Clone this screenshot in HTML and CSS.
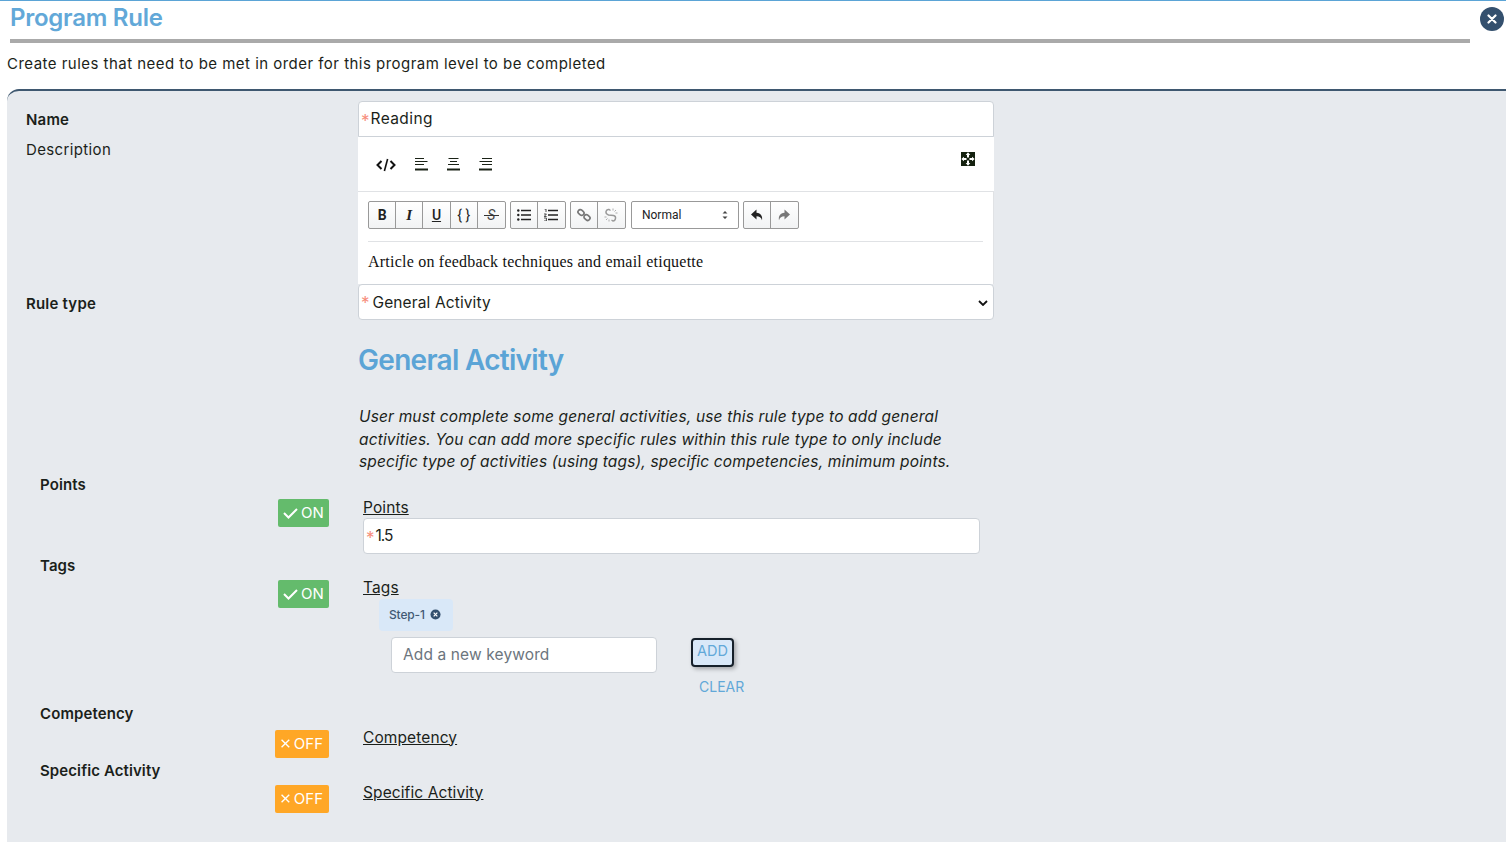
FILE: index.html
```html
<!DOCTYPE html>
<html lang="en">
<head>
<meta charset="utf-8">
<title>Program Rule</title>
<link rel="stylesheet" href="styles.css">
</head>
<body>
<header class="head">
  <h1 class="title">Program Rule</h1>
  <button class="close" aria-label="Close"><svg viewBox="0 0 10 10" width="10" height="10"><path d="M1.500 1.500l7 7M8.500 1.500l-7 7" stroke="#fff" stroke-width="2.200" stroke-linecap="round"/></svg></button>
</header>
<div class="rule"></div>
<p class="subtitle">Create rules that need to be met in order for this program level to be completed</p>
<main class="panel">
  <div class="form-row name-row">
    <label class="lbl strong name-lbl">Name</label>
    <div class="field"><span class="req">*</span>Reading</div>
  </div>
  <div class="form-row desc-row">
    <label class="lbl">Description</label>
    <div class="editor">
      <div class="editor-top">
        <div class="top-icons">
          <svg class="ic-code" viewBox="0 0 20 14" width="20" height="14"><path d="M5.500 3L1.500 7l4 4M14.500 3l4 4-4 4" fill="none" stroke="#111" stroke-width="2"/><path d="M11.600 1L8.400 13" fill="none" stroke="#111" stroke-width="1.600"/></svg>
          <svg viewBox="0 0 13 13" width="13" height="13"><path d="M0 .5h9M0 3.500h12.500M0 6.500h9" stroke="#1a2216" stroke-width="1.100"/><path d="M0 11.500h13" stroke="#1a2216" stroke-width="2"/></svg>
          <svg viewBox="0 0 13 13" width="13" height="13"><path d="M1.500 .5h10M3 3.500h7M1 6.500h11" stroke="#1a2216" stroke-width="1.100"/><path d="M0 11.500h13" stroke="#1a2216" stroke-width="2"/></svg>
          <svg viewBox="0 0 13 13" width="13" height="13"><path d="M3 .5h10M.5 3.500h12.500M3 6.500h10" stroke="#1a2216" stroke-width="1.100"/><path d="M0 11.500h13" stroke="#1a2216" stroke-width="2"/></svg>
        </div>
        <svg class="expand" viewBox="0 0 14 14" width="14" height="14"><rect width="14" height="14" fill="#14210f"/><path d="M7 .3L9.300 3H8v2L7 6 6 5V3H4.700zM7 13.700L9.300 11H8V9L7 8 6 9v2H4.700zM.3 7L3 4.700V6h2l1 1-1 1H3v1.300zM13.700 7L11 4.700V6H9L8 7l1 1h2v1.300z" fill="#fff"/></svg>
      </div>
      <div class="editor-main">
        <div class="toolbar">
          <div class="tgroup tgroup-fmt">
            <button class="tbtn b1">B</button>
            <button class="tbtn b2">I</button>
            <button class="tbtn b3">U</button>
            <button class="tbtn b4">{ }</button>
            <button class="tbtn b5">S</button>
          </div>
          <div class="tgroup">
            <button class="tbtn"><svg viewBox="0 0 14 12" width="14" height="12"><circle cx="1.300" cy="1.500" r="1.200" fill="#222"/><circle cx="1.300" cy="6" r="1.200" fill="#222"/><circle cx="1.300" cy="10.500" r="1.200" fill="#222"/><path d="M4 1.500h10M4 6h10M4 10.500h10" stroke="#222" stroke-width="1.400"/></svg></button>
            <button class="tbtn"><svg viewBox="0 0 14 12" width="14" height="12"><path d="M.5 0h1.500v3M0 5h2.400L.2 7.500h2.400M0 9h2.400v3H0" fill="none" stroke="#222" stroke-width=".8"/><path d="M4 1.500h10M4 6h10M4 10.500h10" stroke="#222" stroke-width="1.400"/></svg></button>
          </div>
          <div class="tgroup">
            <button class="tbtn"><svg viewBox="0 0 14 14" width="14" height="14"><g fill="none" stroke="#777" stroke-width="1.700"><rect x=".8" y="2.200" width="6.400" height="4.600" rx="2.300" transform="rotate(40 4 4.500)"/><rect x="6.800" y="7.200" width="6.400" height="4.600" rx="2.300" transform="rotate(40 10 9.500)"/></g></svg></button>
            <button class="tbtn"><svg viewBox="0 0 14 14" width="14" height="14"><g fill="none" stroke="#999" stroke-width="1.400"><path d="M6.500 2.500L5 1.500Q2.500 1 2 3.500t2.500 3.500l5 .5q2.500.5 2 3T9 13l-1.500-1"/><path d="M9 .5v2M12 2l-1.500 1.500M13.500 5h-2M.5 9h2M2 12l1.500-1.500M5 13.500v-2" stroke-width=".8"/></g></svg></button>
          </div>
          <div class="tselect"><span>Normal</span><svg viewBox="0 0 8 12" width="8" height="12"><path d="M1.500 4.500L4 2l2.500 2.500zM1.500 7.500L4 10l2.500-2.500z" fill="#444"/></svg></div>
          <div class="tgroup">
            <button class="tbtn"><svg viewBox="0 0 14 14" width="14" height="14"><path d="M6.500 1.500L1 6.500l5.500 5V8.300c3 0 4.500 1 5.500 4 .8-4-1-7.300-5.500-7.600z" fill="#222"/></svg></button>
            <button class="tbtn"><svg viewBox="0 0 14 14" width="14" height="14"><path d="M7.500 1.500l5.500 5-5.500 5V8.300c-3 0-4.500 1-5.500 4-.8-4 1-7.300 5.500-7.600z" fill="#777"/></svg></button>
          </div>
        </div>
        <div class="editor-text">Article on feedback techniques and email etiquette</div>
      </div>
    </div>
  </div>
  <div class="form-row type-row">
    <label class="lbl strong type-lbl">Rule type</label>
    <div class="field selectish"><span class="req req-s">*</span><span>General Activity</span><svg class="chev" viewBox="0 0 10 6" width="10" height="6"><path d="M1 1l4 4 4-4" fill="none" stroke="#111" stroke-width="1.800"/></svg></div>
  </div>
  <div class="form-row intro-row">
    <span></span>
    <div class="intro">
      <h2 class="sub-h">General Activity</h2>
      <p class="desc">User must complete some general activities, use this rule type to add general activities. You can add more specific rules within this rule type to only include specific type of activities (using tags), specific competencies, minimum points.</p>
    </div>
  </div>

  <section class="opt opt-points">
    <div class="opt-lbl">Points</div>
    <div class="opt-row">
      <div class="opt-left"><span class="tog on"><svg viewBox="0 0 15 12" width="15" height="12"><path d="M1 6l4.500 4.500L14 2" fill="none" stroke="#fff" stroke-width="2"/></svg>ON</span></div>
      <div class="opt-body">
        <a class="opt-link">Points</a>
        <div class="field points-field"><span class="req">*</span>1.5</div>
      </div>
    </div>
  </section>
  <section class="opt opt-tags">
    <div class="opt-lbl">Tags</div>
    <div class="opt-row">
      <div class="opt-left"><span class="tog on"><svg viewBox="0 0 15 12" width="15" height="12"><path d="M1 6l4.500 4.500L14 2" fill="none" stroke="#fff" stroke-width="2"/></svg>ON</span></div>
      <div class="opt-body">
        <a class="opt-link">Tags</a>
        <div class="chip">Step-1 <svg viewBox="0 0 12 12" width="11" height="11"><circle cx="6" cy="6" r="5.500" fill="#34506e"/><path d="M4 4l4 4M8 4l-4 4" stroke="#fff" stroke-width="1.300"/></svg></div>
        <div class="kw-row">
          <div class="kw-input">Add a new keyword</div>
          <div class="kw-btns">
            <button class="add">ADD</button>
            <button class="clear">CLEAR</button>
          </div>
        </div>
      </div>
    </div>
  </section>
  <section class="opt opt-comp">
    <div class="opt-lbl">Competency</div>
    <div class="opt-row">
      <div class="opt-left"><span class="tog off"><svg viewBox="0 0 11 11" width="11" height="11"><path d="M.7.7l9.600 9.600M10.300.7L.7 10.300" stroke="#fff" stroke-width="1.700"/></svg>OFF</span></div>
      <div class="opt-body"><a class="opt-link">Competency</a></div>
    </div>
  </section>
  <section class="opt opt-spec">
    <div class="opt-lbl">Specific Activity</div>
    <div class="opt-row">
      <div class="opt-left"><span class="tog off"><svg viewBox="0 0 11 11" width="11" height="11"><path d="M.7.7l9.600 9.600M10.300.7L.7 10.300" stroke="#fff" stroke-width="1.700"/></svg>OFF</span></div>
      <div class="opt-body"><a class="opt-link">Specific Activity</a></div>
    </div>
  </section>
</main>
</body>
</html>
```
FILE: styles.css
```css
* { box-sizing: border-box; }
html, body { margin: 0; height: 842px; overflow: hidden; }
body {
  background: #fff;
  border-top: 1px solid #5ba4d6;
  font-family: Inter, "Liberation Sans", sans-serif;
  color: #1b1f1a;
  font-size: 15px;
}
.head { display: flex; justify-content: space-between; align-items: center; height: 35px; padding: 0 2px 0 10px; }
.title { margin: -2px 0 0; font-size: 24px; font-weight: 600; color: #62a8d8; letter-spacing: -0.25px; line-height: 33px; }
.close { width: 24px; height: 24px; border: 0; border-radius: 50%; background: #34506e; display: flex; align-items: center; justify-content: center; padding: 0; }
.rule { height: 4px; width: 1460px; margin: 3px 0 0 10px; background: #aaa; }
.subtitle { margin: 11px 0 0 7px; line-height: 20px; font-size: 15px; letter-spacing: .47px; }
.panel {
  margin: 15px 0 0 7px;
  height: 760px;
  background: #e7eaee;
  border-top: 2px solid #3f5870;
  border-top-left-radius: 12px;
  padding-top: 10px;
}
.form-row { display: grid; grid-template-columns: 351px 636px; }
.lbl { padding-left: 19px; line-height: 20px; font-size: 15px; display: block; letter-spacing: .36px; }
.strong { font-weight: 600; letter-spacing: .2px; }
.name-lbl { padding-top: 9px; }
.field {
  background: #fff;
  border: 1px solid #cdd2d8;
  border-radius: 4px;
  height: 36px;
  line-height: 33px;
  padding-left: 2px;
  font-size: 15.500px;
  letter-spacing: .2px;
}
.req { display: inline-block; width: 9.500px; line-height: 0; vertical-align: -3px; color: #f78c7a; font-size: 17px; letter-spacing: 0; }
.name-row .field { border-radius: 4px 4px 0 0; letter-spacing: .4px; }
.desc-row { height: 147px; }
.desc-row .lbl { padding-top: 3px; }
.editor { background: #fff; height: 147px; }
.editor-top { height: 55px; display: flex; justify-content: space-between; border-bottom: 1px solid #e0e2e5; padding: 15px 19px 0 18px; }
.top-icons { display: flex; align-items: flex-start; gap: 19px; padding-top: 6px; }
.expand { display: block; }
.editor-main { padding: 9px 10px 0; border-right: 1px solid #e0e2e5; height: 92px; }
.toolbar { display: flex; gap: 4px; height: 41px; border-bottom: 1px solid #e0e2e5; align-items: flex-start; }
.tgroup { display: flex; border: 1px solid #999; border-radius: 2px; height: 28px; background: linear-gradient(#fff, #f2f3f4); }
.tbtn {
  position: relative;
  width: 27px; height: 26px; border: 0; border-right: 1px solid #999; background: none; padding: 0;
  font-family: Roboto, sans-serif; font-size: 14px; color: #222;
  display: flex; align-items: center; justify-content: center;
}
.tgroup-fmt .tbtn { width: 27.200px; }
.tbtn:last-child { border-right: 0; }
.b1 { font-weight: 700; }
.b2 { font-style: italic; font-weight: 700; font-family: "Liberation Serif", serif; font-size: 15px; }
.b3 { text-decoration: underline; font-weight: 500; }
.b5 { color: #444; font-size: 14px; font-style: italic; }
.b5::after { content: ""; position: absolute; left: 6px; right: 6px; top: 13px; height: 1px; background: #333; }
.tselect {
  width: 108px; height: 28px; margin-left: 1px; border: 1px solid #999; border-radius: 2px; background: #fff;
  display: flex; justify-content: space-between; align-items: center; padding: 0 9px 0 10px;
  font-family: Roboto, sans-serif; font-size: 12px; color: #222;
}
.editor-text { font-family: "Liberation Serif", serif; font-size: 16px; line-height: 20px; margin-top: 10px; letter-spacing: .22px; color: #111; }
.type-row .field { display: flex; align-items: center; padding-top: 1px; letter-spacing: .12px; }
.type-lbl { padding-top: 10px; }
.req-s { margin-right: 2px; }
.chev { margin-left: auto; margin-right: 5px; }
.sub-h { margin: 0; font-size: 28px; font-weight: 600; letter-spacing: -0.7px; color: #5ba4d6; line-height: 40px; }
.intro { padding-top: 20px; }
.desc { margin: 26px 0 0; padding-left: 1px; width: 604px; font-style: italic; font-size: 15.500px; line-height: 22.500px; letter-spacing: .16px; }
.opt-lbl { padding-left: 33px; font-weight: 600; font-size: 15px; line-height: 20px; letter-spacing: .1px; }
.opt-row { display: grid; grid-template-columns: 322px 1fr; margin-top: 3px; column-gap: 34px; }
.opt-points .opt-row, .opt-tags .opt-row, .opt-spec .opt-row { margin-top: 2px; }
.opt-left { display: flex; justify-content: flex-end; padding-top: 2px; }
.opt-comp .opt-left { padding-top: 3px; }
.tog { height: 28px; border-radius: 2px; color: #fff; display: inline-flex; align-items: center; gap: 3px; font-size: 15px; }
.on { background: #64bb6c; width: 51px; padding: 0 5px; }
.off { background: #ffa726; width: 54px; padding: 0 6px; gap: 4px; }
.opt-link { display: block; text-decoration: underline; font-size: 15.500px; line-height: 19px; letter-spacing: .1px; }
.opt-points .opt-link { margin-top: 1px; }
.opt-comp .opt-link { margin-top: 1px; }
.opt-points { margin-top: 1px; }
.points-field { width: 617px; margin-top: 1px; letter-spacing: -1px; }
.opt-tags { margin-top: 2px; }
.chip { margin: 2px 0 0 16px; width: 74px; height: 32px; background: #d9e8f8; border-radius: 4px; color: #425a74; font-size: 12px; font-weight: 500; letter-spacing: -.15px; display: flex; align-items: center; gap: 5px; padding-left: 10px; }
.kw-row { display: flex; margin: 6px 0 0 28px; }
.kw-input { width: 266px; height: 36px; background: #fff; border: 1px solid #cdd2d8; border-radius: 4px; padding-left: 11px; line-height: 34px; color: #6c757d; font-size: 15.500px; letter-spacing: .12px; }
.kw-btns { display: flex; flex-direction: column; align-items: flex-start; margin-left: 34px; }
.add { width: 43px; height: 29px; margin-top: 1px; background: #d9e8f8; border: 2px solid #16202a; border-radius: 4px; color: #62a8d8; font: 14.500px Inter, sans-serif; padding: 0 0 4px; box-shadow: 2px 2px 4px rgba(0,0,0,.3); }
.clear { margin: 10px 0 0 8px; height: 20px; padding: 0; border: 0; background: none; color: #62a8d8; font: 14px Inter, sans-serif; }
.opt-comp { margin-top: 7px; }
.opt-spec { margin-top: 3px; }
```
